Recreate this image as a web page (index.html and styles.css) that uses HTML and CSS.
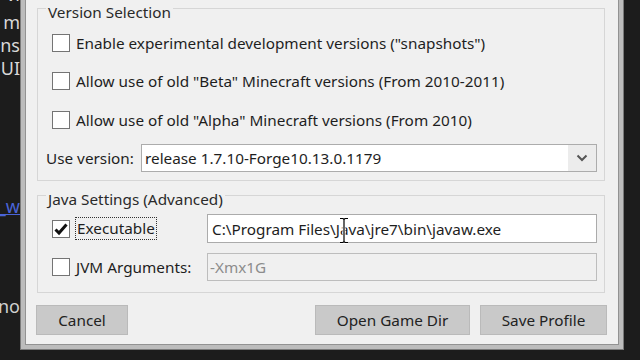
FILE: index.html
```html
<!DOCTYPE html>
<html>
<head>
<meta charset="utf-8">
<link rel="stylesheet" href="styles.css">
</head>
<body>
<div class="screen">
  <div class="behind">
    <div class="frag f-first">vi</div>
    <div class="frag f-second">m</div>
    <div class="frag">ns</div>
    <div class="frag">UI</div>
    <div class="frag link">_w</div>
    <div class="frag f-last">no</div>
  </div>
  <div class="dialog">
    <div class="client">
      <div class="group g1">
        <div class="group-title">Version Selection</div>
        <div class="check-row r1"><span class="box"></span><span class="ck-label">Enable experimental development versions ("snapshots")</span></div>
        <div class="check-row r2"><span class="box"></span><span class="ck-label">Allow use of old "Beta" Minecraft versions (From 2010-2011)</span></div>
        <div class="check-row r3"><span class="box"></span><span class="ck-label">Allow use of old "Alpha" Minecraft versions (From 2010)</span></div>
        <div class="combo-row">
          <span class="combo-label">Use version:</span>
          <div class="combo">
            <span class="combo-text">release 1.7.10-Forge10.13.0.1179</span>
            <span class="combo-btn"><svg width="12" height="8" viewBox="0 0 12 8"><path d="M1.5 1.5 L6 6 L10.5 1.5" fill="none" stroke="#555" stroke-width="2"/></svg></span>
          </div>
        </div>
      </div>
      <div class="group g2">
        <div class="group-title">Java Settings (Advanced)</div>
        <div class="java-row jr1">
          <div class="java-check"><span class="box checked"><svg width="16" height="16" viewBox="0 0 16 16"><path d="M2.5 8.5 L6 12 L13.5 3.5" fill="none" stroke="#111" stroke-width="3"/></svg></span><span class="ck-label focus">Executable</span></div>
          <div class="field">
            <span class="field-text">C:\Program Files\Java\jre7\bin\javaw.exe</span>
            <svg class="ibeam" width="12" height="27" viewBox="0 0 12 27"><path d="M2 1.5 H5 L6 2.5 L7 1.5 H10 M6 2.5 V24.5 M2 25.5 H5 L6 24.5 L7 25.5 H10" fill="none" stroke="#fff" stroke-width="3"/><path d="M2 1.5 H5 L6 2.5 L7 1.5 H10 M6 2.5 V24.5 M2 25.5 H5 L6 24.5 L7 25.5 H10" fill="none" stroke="#000" stroke-width="1.2"/></svg>
          </div>
        </div>
        <div class="java-row jr2">
          <div class="java-check"><span class="box"></span><span class="ck-label">JVM Arguments:</span></div>
          <div class="field disabled"><span class="field-text">-Xmx1G</span></div>
        </div>
      </div>
      <div class="buttons">
        <button class="btn cancel">Cancel</button>
        <span class="spacer"></span>
        <button class="btn opendir">Open Game Dir</button>
        <button class="btn save">Save Profile</button>
      </div>
    </div>
  </div>
</div>
</body>
</html>
```

FILE: styles.css
```css
* { box-sizing: border-box; }
html, body { margin: 0; padding: 0; }
body { background: #1b1b1b; }
.screen {
  width: 640px;
  height: 360px;
  overflow: hidden;
  display: flex;
  background: #1c1c1c;
  font-family: "Noto Sans", "Open Sans", sans-serif;
  font-size: 15.3px;
  color: #1e1e1e;
}
.behind {
  width: 20px;
  flex: none;
  overflow: hidden;
  display: flex;
  flex-direction: column;
  font-size: 18px;
  line-height: 22px;
  color: #d8d8d8;
}
.frag {
  display: flex;
  justify-content: flex-end;
  white-space: nowrap;
  height: 22px;
  margin-top: 1px;
}
.f-first { margin-top: -17px; }
.f-second { margin-top: 6px; }
.link { margin-top: 116px; color: #4a64d8; text-decoration: underline; }
.f-last { margin-top: 78px; color: #cfcfcf; }

.dialog {
  width: 604px;
  height: 350px;
  flex: none;
  background: #bcbcbc;
  border: 1px solid #7a7a7a;
  border-top: 0;
  padding: 0 4px 4px 4px;
}
.client {
  height: 100%;
  background: #f0f0f0;
  border: 1px solid #929292;
  border-top: 0;
  padding-top: 8px;
  display: flex;
  flex-direction: column;
}
.group {
  position: relative;
  border: 1px solid #d6d6d6;
  margin: 0 13px 0 11px;
  display: flex;
  flex-direction: column;
}
.group-title {
  position: absolute;
  left: 8px;
  top: -7px;
  padding: 0 2px;
  background: #f0f0f0;
  line-height: 20px;
  color: #2a2a2a;
}
.g1 { padding: 24px 7px 8px 8px; }
.check-row {
  display: flex;
  align-items: center;
  height: 20px;
  margin-left: 6px;
}
.r2 { margin-top: 18px; }
.r3 { margin-top: 19px; }
.box {
  width: 18px;
  height: 18px;
  flex: none;
  background: #fff;
  border: 1px solid #747474;
  display: flex;
  align-items: center;
  justify-content: center;
}
.ck-label { margin-left: 6px; white-space: nowrap; }
.combo-row {
  display: flex;
  align-items: center;
  margin-top: 14px;
  height: 28px;
}
.combo-label { width: 95px; flex: none; }
.combo {
  flex: 1;
  height: 28px;
  display: flex;
  align-items: center;
  background: #fff;
  border: 1px solid #acacac;
}
.combo-text { flex: 1; padding-left: 3px; white-space: nowrap; }
.combo-btn {
  width: 28px;
  height: 100%;
  background: #ececec;
  display: flex;
  align-items: center;
  justify-content: center;
}
.g2 { margin-top: 14px; padding: 18px 7px 11px 14px; }
.java-row { display: flex; align-items: center; }
.jr1 { height: 29px; }
.jr2 { height: 28px; margin-top: 10px; }
.java-check { width: 155px; flex: none; display: flex; align-items: center; }
.focus {
  margin-left: 7px;
  line-height: 19px;
  outline: 1px dotted #333;
  outline-offset: 1px;
}
.field {
  position: relative;
  flex: 1;
  height: 100%;
  display: flex;
  align-items: center;
  background: #fff;
  border: 1px solid #ababab;
}
.field-text { padding-left: 4px; white-space: nowrap; }
.field.disabled { background: #f0f0f0; border-color: #bdbdbd; }
.field.disabled .field-text { color: #8c8c8c; padding-left: 2px; }
.ibeam { position: absolute; left: 130px; top: 2px; }
.buttons {
  display: flex;
  margin-top: 12px;
  padding: 0 11px 0 10px;
  height: 30px;
}
.spacer { flex: 1; }
.btn {
  height: 30px;
  font-family: inherit;
  font-size: 15.3px;
  color: #222;
  background: #c9c9c9;
  border: 1px solid #bababa;
  border-radius: 0;
  padding: 0;
}
.cancel { width: 92px; }
.opendir { width: 155px; }
.save { width: 127px; margin-left: 10px; }
```
